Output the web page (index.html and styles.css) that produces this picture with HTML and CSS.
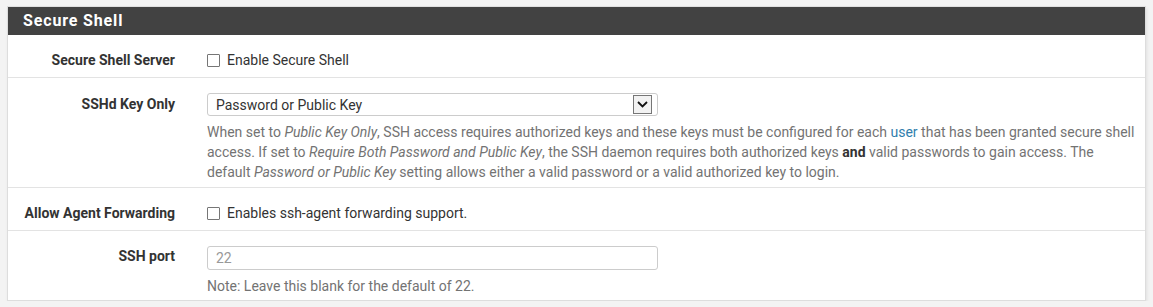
FILE: index.html
```
<!DOCTYPE html>
<html lang="en">
<head>
  <meta charset="UTF-8" />
  <title>Secure Shell</title>
  <link rel="stylesheet" href="styles.css">
</head>
<body>
  <div class="panel">
    <div class="panel-heading">
      <h2>Secure Shell</h2>
    </div>
    <div class="panel-body">
      <div class="form-row">
        <div class="form-label">Secure Shell Server</div>
        <div class="form-control-col">
          <label class="check"><span class="box"></span>Enable Secure Shell</label>
        </div>
      </div>

      <div class="form-row row-select">
        <div class="form-label">SSHd Key Only</div>
        <div class="form-control-col">
          <div class="select">
            <span class="select-text">Password or Public Key</span>
            <span class="select-btn">
              <svg width="11" height="7" viewBox="0 0 11 7"><path d="M1 1 L5.5 5.5 L10 1" fill="none" stroke="#111" stroke-width="1.8"/></svg>
            </span>
          </div>
          <p class="help">When set to <em>Public Key Only</em>, SSH access requires authorized keys and these keys must be configured for each <a href="#">user</a> that has been granted secure shell access. If set to <em>Require Both Password and Public Key</em>, the SSH daemon requires both authorized keys <strong>and</strong> valid passwords to gain access. The default <em>Password or Public Key</em> setting allows either a valid password or a valid authorized key to login.</p>
        </div>
      </div>

      <div class="form-row">
        <div class="form-label">Allow Agent Forwarding</div>
        <div class="form-control-col">
          <label class="check"><span class="box"></span>Enables ssh-agent forwarding support.</label>
        </div>
      </div>

      <div class="form-row row-input">
        <div class="form-label">SSH port</div>
        <div class="form-control-col">
          <input class="text-input" type="text" placeholder="22">
          <p class="help">Note: Leave this blank for the default of 22.</p>
        </div>
      </div>
    </div>
  </div>
</body>
</html>
```
FILE: styles.css
```
* {
  box-sizing: border-box;
  margin: 0;
  padding: 0;
}
body {
  font-family: Roboto, "Liberation Sans", sans-serif;
  font-size: 14px;
  line-height: 20px;
  color: #333;
  background: #f3f3f3;
  padding: 6px 7px 0 7px;
}
.panel {
  background: #fff;
  border: 1px solid #ddd;
  border-top: none;
  box-shadow: 1px 2px 3px rgba(0,0,0,0.08);
}
.panel-heading {
  background: #424242;
  height: 29px;
  padding: 0 15px;
  border-top: 1px solid #e0e0e0;
  display: flex;
  align-items: center;
}
.panel-heading h2 {
  color: #fff;
  font-size: 16px;
  font-weight: 700;
  letter-spacing: 0.85px;
}
.form-row {
  display: grid;
  grid-template-columns: 169px 1fr;
  column-gap: 30px;
  padding: 15px 0 7px;
  border-bottom: 1px solid #e3e3e3;
}
.form-row:last-child {
  border-bottom: none;
}
.form-label {
  text-align: right;
  font-weight: 700;
  color: #333;
  padding-right: 2px;
}
.form-control-col {
  padding-right: 10px;
}
.check {
  display: flex;
  align-items: center;
  gap: 7px;
}
.box {
  width: 13px;
  height: 13px;
  border: 1px solid #767676;
  border-radius: 1px;
  background: #fff;
}
.row-select {
  padding: 15px 0 5px;
}
.row-select .form-label {
  padding-top: 1px;
}
.select {
  width: 451px;
  height: 23px;
  border: 1px solid #ccc;
  border-radius: 3px;
  display: flex;
  align-items: center;
  padding: 0 2px 0 8px;
}
.select-text {
  flex: 1;
}
.select-btn {
  width: 19px;
  height: 19px;
  border: 1px solid #767676;
  background: #f2f2f2;
  display: flex;
  align-items: center;
  justify-content: center;
  margin-right: 3px;
}
.help {
  color: #737373;
  margin-top: 6px;
}
.help a {
  color: #317eac;
  text-decoration: none;
}
.help strong {
  color: #333;
}
.row-input {
  padding: 15px 0 4px;
}
.text-input {
  display: block;
  width: 451px;
  height: 24px;
  border: 1px solid #ccc;
  border-radius: 3px;
  padding: 0 8px;
  font-family: inherit;
  font-size: 14px;
}
.text-input::placeholder {
  color: #999;
}
.row-input .help {
  margin-top: 6px;
}
```
